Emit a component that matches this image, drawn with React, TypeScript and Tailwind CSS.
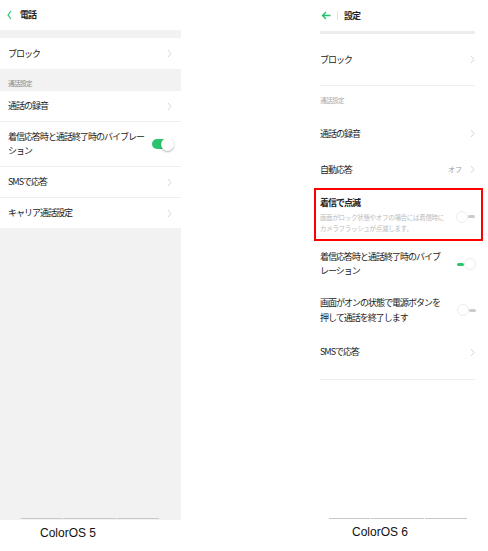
import React from 'react';

const jp = { fontFamily: '"Noto Sans CJK JP", "Noto Sans", sans-serif' };

function Chevron({ className = '' }: { className?: string }) {
    return (
        <svg width="5" height="9" viewBox="0 0 5 9" className={className}>
            <polyline points="1,1 4,4.5 1,8" fill="none" stroke="#cccccc" strokeWidth="0.8" />
        </svg>
    );
}

function OldRow({ label, h = 'h-[31px]', border = true }: { label: string; h?: string; border?: boolean }) {
    return (
        <div className={`${h} bg-white flex items-center justify-between pl-[8px] pr-[9px] ${border ? 'border-b border-[#eeeeee]' : ''}`}>
            <span className="text-[9px] tracking-[-1px] text-[#222]">{label}</span>
            <Chevron />
        </div>
    );
}

function NewRow({ label, h, right }: { label: string; h: string; right?: React.ReactNode }) {
    return (
        <div className={`${h} flex items-center justify-between pl-[6px] pr-[8px]`}>
            <span className="text-[9px] tracking-[-1px] text-[#222]">{label}</span>
            <div className="flex items-center gap-[8px]">
                {right}
                <Chevron />
            </div>
        </div>
    );
}

function SwitchOff() {
    return (
        <div className="flex items-center">
            <div className="w-[12px] h-[12px] rounded-full border border-[#ececec] bg-white" />
            <div className="w-[7px] h-[3px] rounded-full bg-[#cccccc]" />
        </div>
    );
}

function SwitchOn() {
    return (
        <div className="flex items-center">
            <div className="w-[7px] h-[3px] rounded-full bg-[#2ac46e]" />
            <div className="w-[12px] h-[12px] rounded-full border border-[#ececec] bg-white" />
        </div>
    );
}

function NavLines() {
    return (
        <div className="flex gap-[1px]">
            <div className="w-[41px] h-[1px] bg-[#c8c8c8]" />
            <div className="w-[53px] h-[1px] bg-[#c8c8c8]" />
            <div className="w-[42px] h-[1px] bg-[#c8c8c8]" />
        </div>
    );
}

export default function App() {
    return (
        <div className="w-[488px] h-[551px] bg-white flex overflow-hidden" style={jp}>

            {/* ColorOS 5 */}
            <div className="w-[181px] flex flex-col">
                <div className="h-[520px] bg-[#f2f2f2] flex flex-col">
                    <div className="h-[30px] bg-white flex items-center pl-[7px] gap-[8px]">
                        <svg width="5" height="10" viewBox="0 0 5 10">
                            <polyline points="4,1 1,5 4,9" fill="none" stroke="#2bc46e" strokeWidth="1.2" />
                        </svg>
                        <span className="text-[9px] tracking-[-1px] font-bold text-[#222]">電話</span>
                    </div>
                    <div className="h-[8px]" />
                    <OldRow label="ブロック" border={false} />
                    <div className="h-[22px] flex items-end pl-[8px] pb-[2px]">
                        <span className="text-[6.5px] tracking-[-0.5px] text-[#888]">通話設定</span>
                    </div>
                    <OldRow label="通話の録音" h="h-[31px]" />
                    <div className="h-[45px] bg-white border-b border-[#eeeeee] flex items-center justify-between pl-[8px] pr-[7px]">
                        <span className="text-[9px] tracking-[-1px] leading-[14px] text-[#222] w-[140px]">
                            着信応答時と通話終了時のバイブレーション
                        </span>
                        <div className="relative w-[22px] h-[13px] flex items-center">
                            <div className="w-[17px] h-[10px] rounded-full bg-[#2ac46e]" />
                            <div className="absolute right-0 top-0 w-[13px] h-[13px] rounded-full bg-white shadow-[0_1px_2px_rgba(0,0,0,0.3)]" />
                        </div>
                    </div>
                    <OldRow label="SMSで応答" h="h-[31px]" />
                    <OldRow label="キャリア通話設定" h="h-[30px]" border={false} />
                    <div className="flex-1 flex items-end pl-[21px] pb-[1px]">
                        <NavLines />
                    </div>
                </div>
                <div className="flex-1 flex items-center pl-[40px] pb-[6px]">
                    <span className="text-[12px] text-[#111]" style={{ fontFamily: '"Liberation Sans", Arial, sans-serif' }}>ColorOS 5</span>
                </div>
            </div>

            <div className="w-[133px]" />

            {/* ColorOS 6 */}
            <div className="w-[169px] flex flex-col">
                <div className="h-[520px] flex flex-col">
                    <div className="h-[31px] flex items-center pl-[7px]">
                        <svg width="10" height="9" viewBox="0 0 10 9">
                            <path d="M5 1 L1.5 4.5 L5 8 M1.5 4.5 H9.5" fill="none" stroke="#1fc46b" strokeWidth="1.4" />
                        </svg>
                        <div className="w-[1px] h-[9px] bg-[#e2e2e2] ml-[6px] mr-[6px]" />
                        <span className="text-[9px] tracking-[-1px] font-bold text-[#222]">設定</span>
                    </div>
                    <div className="mx-[6px] mr-[8px] h-[3px] bg-[#ececec]" />
                    <NewRow label="ブロック" h="h-[51px]" />
                    <div className="mx-[6px] mr-[8px] h-[1px] bg-[#efefef]" />
                    <div className="h-[30px] flex items-center pl-[6px]">
                        <span className="text-[6.5px] tracking-[-0.5px] text-[#aaa]">通話設定</span>
                    </div>
                    <NewRow label="通話の録音" h="h-[35px]" />
                    <NewRow label="自動応答" h="h-[37px]" right={<span className="text-[7px] text-[#999]">オフ</span>} />
                    <div className="h-[53px] border-2 border-[#ff0000] flex items-center justify-between pl-[4px] pr-[6px]">
                        <div className="flex flex-col">
                            <span className="text-[9px] tracking-[-1px] font-bold text-[#222] leading-[14px]">着信で点滅</span>
                            <span className="text-[6.5px] tracking-[-0.3px] text-[#bbb] leading-[11px] mt-[2px] w-[130px]">
                                画面がロック状態やオフの場合には着信時にカメラフラッシュが点滅します。
                            </span>
                        </div>
                        <div className="mt-[4px]"><SwitchOff /></div>
                    </div>
                    <div className="h-[46px] flex items-center justify-between pl-[6px] pr-[7px]">
                        <span className="text-[9px] tracking-[-1px] leading-[14px] text-[#222] w-[125px]">
                            着信応答時と通話終了時のバイブレーション
                        </span>
                        <SwitchOn />
                    </div>
                    <div className="h-[46px] flex items-center justify-between pl-[6px] pr-[7px]">
                        <span className="text-[9px] tracking-[-1px] leading-[15px] text-[#222] w-[125px]">
                            画面がオンの状態で電源ボタンを押して通話を終了します
                        </span>
                        <SwitchOff />
                    </div>
                    <NewRow label="SMSで応答" h="h-[38px]" />
                    <div className="mx-[6px] mr-[8px] mt-[8px] h-[1px] bg-[#efefef]" />
                    <div className="flex-1 flex items-end pl-[15px] pb-[1px]">
                        <NavLines />
                    </div>
                </div>
                <div className="flex-1 flex items-center pl-[38px] pb-[8px]">
                    <span className="text-[12px] text-[#111]" style={{ fontFamily: '"Liberation Sans", Arial, sans-serif' }}>ColorOS 6</span>
                </div>
            </div>
        </div>
    );
}
